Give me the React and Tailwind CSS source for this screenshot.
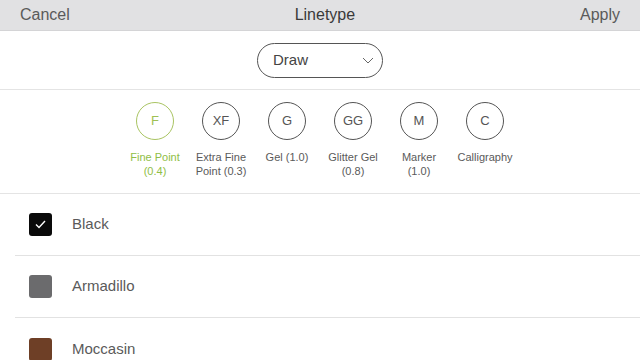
import { useState } from 'react';

const pens = [
  { code: 'F', label: ['Fine Point', '(0.4)'] },
  { code: 'XF', label: ['Extra Fine', 'Point (0.3)'] },
  { code: 'G', label: ['Gel (1.0)'] },
  { code: 'GG', label: ['Glitter Gel', '(0.8)'] },
  { code: 'M', label: ['Marker', '(1.0)'] },
  { code: 'C', label: ['Calligraphy'] },
];

const colors = [
  { name: 'Black', swatch: 'bg-[#0a0a0a]' },
  { name: 'Armadillo', swatch: 'bg-[#6b6b6d]' },
  { name: 'Moccasin', swatch: 'bg-[#6e3f26]' },
];

const App = () => {
  const [pen, setPen] = useState('F');
  const [color, setColor] = useState('Black');

  return (
    <div className="w-[640px] h-[360px] overflow-hidden bg-white font-['Liberation_Sans',Arial,sans-serif]">
      {/* Header */}
      <div className="h-[31px] bg-[#e1e1e3] border-b border-[#d4d4d6] flex items-center justify-between px-5 text-[16px] text-[#5a5a5a]">
        <span>Cancel</span>
        <span className="text-[#3a3a3a]">Linetype</span>
        <span>Apply</span>
      </div>

      {/* Mode dropdown */}
      <div className="h-[59px] flex items-center justify-center border-b border-[#e4e4e4]">
        <div className="w-[126px] h-[35px] rounded-full border border-[#555] flex items-center justify-between pl-[15px] pr-[8px] text-[15px] text-[#444]">
          <span>Draw</span>
          <svg width="12" height="7" viewBox="0 0 12 7" fill="none" stroke="#666" strokeWidth="1">
            <path d="M1 1l5 5 5-5" />
          </svg>
        </div>
      </div>

      {/* Pen types */}
      <div className="h-[104px] flex justify-center pt-[12px] border-b border-[#e4e4e4]">
        {pens.map((p) => {
          const active = p.code === pen;
          return (
            <button
              key={p.code}
              onClick={() => setPen(p.code)}
              className="w-[66px] flex flex-col items-center"
            >
              <div
                className={`w-[38px] h-[38px] rounded-full border flex items-center justify-center text-[13px] ${
                  active ? 'border-[#a9c462] text-[#9fc054]' : 'border-[#555] text-[#555]'
                }`}
              >
                {p.code}
              </div>
              <div className={`mt-[10px] text-[11px] leading-[14px] text-center ${active ? 'text-[#8fbe45]' : 'text-[#5a5a5a]'}`}>
                {p.label.map((l) => (
                  <div key={l}>{l}</div>
                ))}
              </div>
            </button>
          );
        })}
      </div>

      {/* Colors */}
      <div>
        {colors.map((c, i) => (
          <div key={c.name} className={i < colors.length - 1 ? 'pl-[15px] ' : ''}>
            <button
              onClick={() => setColor(c.name)}
              className={`w-full h-[62px] flex items-center text-left ${i < colors.length - 1 ? 'border-b border-[#e2e2e2] pl-[14px]' : 'pl-[29px]'}`}
            >
              <div className={`w-[23px] h-[23px] rounded-[3px] flex items-center justify-center ${c.swatch}`}>
                {color === c.name && (
                  <svg width="11" height="9" viewBox="0 0 11 9" fill="none" stroke="#fff" strokeWidth="1.4">
                    <path d="M1 4.5l3 3 6-6.5" />
                  </svg>
                )}
              </div>
              <span className="ml-[20px] text-[15px] text-[#5a5a5a]">{c.name}</span>
            </button>
          </div>
        ))}
      </div>
    </div>
  );
};

export default App;
